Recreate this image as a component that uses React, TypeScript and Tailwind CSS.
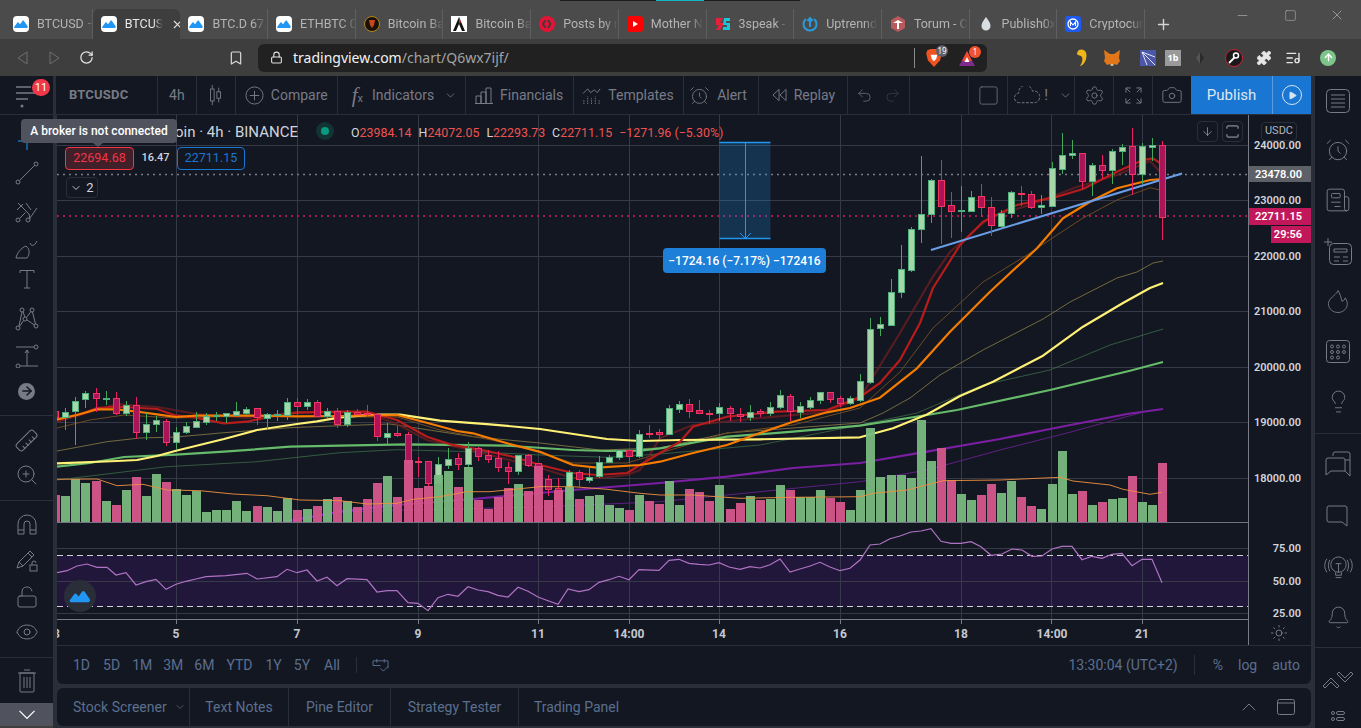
import {
  AlarmClock,
  ArrowDown,
  ArrowRight,
  ArrowUp,
  Bell,
  Bookmark,
  Camera,
  ChevronDown,
  ChevronUp,
  Eye,
  Lightbulb,
  ListMusic,
  Lock,
  LockOpen,
  Minus,
  Newspaper,
  Play,
  Plus,
  Puzzle,
  Redo2,
  RotateCw,
  Ruler,
  Settings,
  Square,
  Sun,
  Undo2,
  X,
  ZoomIn,
} from "lucide-react";
import type { ReactNode } from "react";

// [top, bottom, high, low, up]
const candles: [number, number, number, number, number][] = [
  [411, 417, 408, 418, 0], [412, 417, 408, 430, 1], [401, 411, 397, 445, 1], [393, 399, 391, 408, 1],
  [393, 398, 388, 412, 0], [398, 399, 391, 405, 1], [398, 413, 392, 415, 0], [405, 413, 401, 416, 1],
  [405, 432, 397, 439, 0], [424, 432, 413, 440, 1], [420, 424, 416, 432, 1], [421, 442, 419, 446, 0],
  [432, 442, 427, 450, 1], [426, 432, 422, 434, 1], [421, 427, 412, 427, 1], [416, 422, 413, 425, 1],
  [415, 416, 412, 421, 1], [413, 416, 413, 423, 1], [411, 415, 402, 415, 1], [409, 413, 407, 415, 1],
  [408, 417, 408, 425, 0], [414, 418, 413, 430, 1], [414, 415, 410, 421, 1], [402, 415, 398, 420, 1],
  [402, 406, 398, 415, 0], [402, 406, 399, 410, 1], [402, 416, 400, 416, 0], [411, 416, 408, 418, 1],
  [411, 424, 408, 428, 0], [412, 424, 410, 427, 1], [412, 414, 409, 414, 0], [413, 414, 405, 417, 0],
  [414, 436, 413, 441, 0], [433, 437, 423, 444, 1], [433, 435, 426, 437, 0], [434, 462, 432, 470, 0],
  [461, 462, 457, 477, 0], [461, 483, 461, 487, 0], [464, 483, 457, 495, 1], [459, 465, 448, 469, 1],
  [458, 464, 453, 470, 0], [448, 464, 442, 467, 1], [448, 456, 447, 461, 0], [455, 459, 450, 463, 0],
  [458, 467, 451, 472, 0], [467, 471, 462, 484, 0], [455, 471, 455, 475, 1], [455, 465, 454, 467, 0],
  [463, 485, 463, 490, 0], [479, 489, 475, 496, 0], [488, 499, 478, 502, 0], [472, 499, 470, 500, 1],
  [472, 479, 470, 487, 0], [477, 480, 468, 483, 1], [462, 476, 456, 478, 1], [457, 462, 455, 463, 1],
  [450, 457, 450, 460, 1], [450, 456, 449, 463, 0], [434, 456, 430, 458, 1], [433, 434, 425, 438, 0],
  [432, 434, 429, 439, 0], [408, 434, 405, 435, 1], [404, 409, 401, 413, 1], [404, 411, 399, 418, 0],
  [410, 413, 400, 413, 0], [413, 413, 410, 424, 0], [407, 413, 403, 421, 1], [408, 413, 406, 421, 0],
  [414, 416, 408, 422, 0], [412, 417, 405, 421, 1], [411, 413, 409, 417, 0], [407, 413, 402, 416, 1],
  [395, 407, 390, 409, 1], [396, 411, 394, 421, 0], [406, 412, 402, 418, 1], [400, 407, 397, 409, 1],
  [392, 400, 392, 404, 1], [392, 399, 392, 403, 0], [398, 403, 396, 407, 0], [398, 403, 396, 405, 1],
  [381, 400, 374, 402, 1], [329, 382, 318, 384, 1], [324, 328, 317, 336, 1], [292, 325, 279, 326, 1],
  [269, 292, 245, 298, 1], [229, 270, 227, 272, 1], [214, 229, 156, 243, 1], [180, 214, 179, 223, 1],
  [180, 206, 160, 244, 0], [205, 211, 192, 238, 0], [210, 211, 186, 232, 1], [197, 211, 191, 212, 1],
  [196, 207, 184, 217, 0], [207, 225, 197, 236, 0], [213, 226, 210, 229, 1], [192, 213, 191, 218, 1],
  [193, 194, 186, 206, 0], [194, 207, 191, 209, 0], [205, 207, 195, 214, 1], [168, 206, 162, 206, 1],
  [155, 169, 133, 174, 1], [153, 155, 140, 159, 1], [153, 181, 153, 189, 0], [165, 181, 163, 196, 1],
  [165, 170, 155, 179, 0], [151, 170, 149, 184, 1], [147, 151, 144, 165, 1], [146, 174, 128, 195, 0],
  [146, 174, 143, 184, 1], [145, 147, 138, 161, 1], [145, 217, 141, 240, 0],
];

// positive is a green bar, negative a pink one
const volumes = [
  -27, 26, 43, 39, -41, 21, -17, 32, -45, 26, 48, -40, 33, 27, 31, 10, 12, 12, 21, 11, -16, 15, 11, 24, -12, 13, -16,
  23, -25, 21, -15, -23, -39, 46, -25, -62, -34, -36, 47, 51, -35, 55, -22, -13, -25, -34, 38, -31, -56, -22, -32, 35,
  -23, 26, 27, 17, 14, -12, 27, -21, -18, 41, 17, -33, -30, -21, 37, -13, -19, 26, -22, 23, 37, -32, 25, 25, 32, -24,
  -20, 12, 32, 94, 45, 47, 47, 44, 102, 61, -74, -42, 28, 22, -27, -38, 29, 41, -25, -16, 13, 38, 71, 28, -31, 17, -20,
  23, 24, -46, 20, 17, -59,
];

const rsi = "57,572.7 67,570.7 77,566 87,564 97,567.3 107,567.3 116,575 126,572.7 136,585 146,581.7 156,579.3 166,589.3 176,584.3 186,581.3 196,579 206,576.7 226,575.7 247,573.3 257,579 277,576.7 287,569.3 297,572.7 307,570 317,581 327,577.3 337,585.7 347,578.7 367,579.7 377,592 387,590.7 397,590.7 408,602.7 418,603.3 428,610.7 438,597.7 448,594.3 458,596.3 468,586.7 478,590 488,591.7 498,595.3 508,597 518,587.3 528,591.3 538,597 548,600.7 558,604.3 568,589 579,591.7 589,589.7 599,582.3 609,579.7 619,576.3 629,579.7 639,569.7 659,570.3 669,560.3 679,559.3 689,563.3 699,564.3 709,565 719,562.7 729,567 740,569.3 750,566.7 760,568 770,564.7 780,559 790,572 800,569 810,566 820,562.3 830,567 840,570.7 850,568.3 860,560 870,545 880,544 890,538.7 900,536 911,532 921,531 931,528.7 941,541.3 951,543.3 961,543.3 971,541.7 981,546.7 991,555.3 1002,554 1012,549 1022,550 1032,556.3 1042,556 1052,549 1062,546.3 1072,546.3 1082,559.7 1092,556.3 1102,558.3 1112,554.3 1122,553.3 1132,565.7 1142,559.3 1152,559.3 1162,582.7";

const lines: { pts: string; color: string; width: number; opacity?: number }[] = [
  {
    pts: "57,451 107,441.7 140,438 176,437 224,432.7 290,427.7 340,425.7 390,424 473,436.7 540,443 600,450 660,448 727,433 793,428 860,423 883,413 910,398 940,375 983,350 1043,319 1070,302 1117,278 1137,272 1153,263 1163,261",
    color: "#8a7f45",
    width: 1,
    opacity: 0.8,
  },
  {
    pts: "57,480 167,466.7 257,461.7 340,452.7 397,449.7 473,451.7 540,455 607,457.3 660,454 760,445 860,425 917,413 983,385 1050,370 1110,345 1163,329",
    color: "#3c6b48",
    width: 1,
    opacity: 0.8,
  },
  {
    pts: "57,428 90,420 124,415 176,418 257,415.7 340,417 397,417 440,430 507,443 573,463 627,463 727,433 793,425 860,408 900,372 933,328 983,282 1027,255 1057,235 1083,218 1117,200 1150,187.7 1160,190",
    color: "#6b4a22",
    width: 1,
  },
  {
    pts: "340,512 407,510 540,507 660,501.7 760,491.7 860,481.7 927,470 1000,450 1067,433 1140,413",
    color: "#5f1f82",
    width: 1,
  },
  {
    pts: "57,422 97,410 117,404 157,407 197,414 247,418 297,412 367,413 397,424 427,440 490,455 540,468 573,478 600,478 627,475 640,470 660,438 693,425 760,418 827,412 860,398 900,333 932,278 950,252 990,217 1030,205 1077,187 1117,175 1150,161 1163,175",
    color: "#6e1f22",
    width: 2.2,
    opacity: 0.75,
  },
  {
    pts: "283,522 340,511.7 390,505.7 473,499 573,490 660,483 727,476.7 793,468 860,463 927,451.7 1000,439 1050,429 1127,414 1163,409",
    color: "#7b1fa2",
    width: 2.2,
  },
  {
    pts: "57,466.7 90,463 124,457 176,454.7 224,451.7 290,446.7 340,445.7 407,444.3 507,445.7 573,450 607,451 640,450.7 660,448.3 727,436.7 793,431.7 860,425.7 927,415 957,410 1050,390 1130,370.7 1163,362",
    color: "#66bb6a",
    width: 2.2,
  },
  {
    pts: "57,463.3 117,461 137,460 157,456 176,450.7 224,439 257,430 297,424 317,421.3 340,417.3 373,414.7 400,414.7 440,420.7 490,424.3 540,429 607,439 640,441 680,440 760,439.3 860,437.3 893,428.3 927,414.5 960,396 993,381.7 1043,355.7 1083,326.7 1123,303 1150,288 1163,283",
    color: "#fff176",
    width: 2.2,
  },
  {
    pts: "57,420 84,413 97,408 117,406.7 140,408 157,409 174,415 197,418 224,423.3 247,421.7 270,416.7 297,412.7 340,411.7 367,411.7 397,420 427,436.7 450,444.3 490,451.7 513,456.7 540,465 573,473 597,475 627,473 640,465 660,453 680,441.7 693,426.7 727,416.7 777,411.7 827,410 860,397 880,383 900,360 920,323 933,288 960,245 983,221.7 1017,205 1057,196.7 1083,189 1117,171.7 1143,160 1153,158.3 1163,165",
    color: "#b71c1c",
    width: 2.2,
  },
  {
    pts: "57,419.3 77,415 97,409.3 117,409.3 140,412 157,414.3 176,417 197,415.7 257,415.7 297,416.3 340,416 397,415 423,421.7 457,431 473,433.3 507,443.3 540,451.7 573,465 597,467.7 640,465 660,461.7 693,453 727,445 760,433 793,421.7 827,412.3 850,408 880,397.7 917,368.3 950,331.7 990,291.7 1037,248.3 1063,218.3 1090,201.7 1117,188.3 1150,180 1163,179",
    color: "#f57c00",
    width: 2.2,
  },
];

const volumeMa = "57,479.3 97,479 117,485.7 143,484.3 167,490 200,490.7 233,494 267,495.7 300,500 340,500.7 367,504 397,503.3 413,499.3 440,496.7 467,491.7 490,491.7 540,486.7 573,486.7 607,489.3 640,493.3 660,495 693,495 740,498.3 793,497.3 860,496.7 873,493.3 907,490 943,480.7 1000,480 1060,477.3 1073,481 1110,485 1123,489.3 1150,494.3 1162,492.3";

const hGrid = [145.5, 200.5, 256.5, 311.5, 367.5, 422.5, 478.5, 548.5, 581.5, 613.5];
const vGrid = [176.5, 297.5, 418.5, 538.5, 629.5, 719.5, 840.5, 961.5, 1051.5, 1142.5];

const timeLabels = [
  { x: 176, t: "5" }, { x: 297, t: "7" }, { x: 418, t: "9" }, { x: 538, t: "11" }, { x: 629, t: "14:00" },
  { x: 719, t: "14" }, { x: 840, t: "16" }, { x: 961, t: "18" }, { x: 1052, t: "14:00" }, { x: 1142, t: "21" },
];

const priceLabels = [
  { y: 145, t: "24000.00" }, { y: 200, t: "23000.00" }, { y: 256, t: "22000.00" }, { y: 311, t: "21000.00" },
  { y: 367, t: "20000.00" }, { y: 422, t: "19000.00" }, { y: 478, t: "18000.00" }, { y: 548, t: "75.00" },
  { y: 581, t: "50.00" }, { y: 613, t: "25.00" },
];

function TvLogo({ className }: { className: string }) {
  return (
    <svg viewBox="0 0 24 16" className={className}>
      <path
        d="M1.5 15c-1.2 0-1.8-1.3-1-2.3l5-6.9c.7-.9 1.8-.9 2.5-.1l2.4 2.8 4-5.6c.7-1 2-1 2.7 0l6 8.5c.8 1.2.3 3.6-1.6 3.6z"
        fill="#2196f3"
      />
    </svg>
  );
}

function Favicon({ kind }: { kind: string }) {
  const box = "w-4 h-4 shrink-0";
  if (kind === "tv")
    return (
      <span className={`${box} bg-white rounded-sm flex items-center justify-center`}>
        <TvLogo className="w-3.5 h-2.5" />
      </span>
    );
  if (kind === "btcb")
    return (
      <svg viewBox="0 0 16 16" className={box}>
        <circle cx="8" cy="8" r="7.5" fill="#1a1208" stroke="#b8861b" />
        <path d="M5 4h6l-1 5-2 3-2-3z" fill="#c9471f" />
      </svg>
    );
  if (kind === "a")
    return (
      <svg viewBox="0 0 16 16" className={box}>
        <rect width="16" height="16" fill="#fff" />
        <path d="M8 1l6 14h-3L8 8l-3 7H2z" fill="#111" />
        <path d="M8 1l2 5-2 2z" fill="#d9232e" />
      </svg>
    );
  if (kind === "hive")
    return (
      <svg viewBox="0 0 16 16" className={box}>
        <circle cx="8" cy="8" r="8" fill="#e31337" />
        <path d="M3 8l2.5-4h2L5 8l2.5 4h-2zM8 4h2l2.5 4-2.5 4H8l2.5-4z" fill="#3a3a3a" />
      </svg>
    );
  if (kind === "yt")
    return (
      <svg viewBox="0 0 16 16" className={box}>
        <rect width="16" height="16" rx="3" fill="#f00" />
        <path d="M6 5l5 3-5 3z" fill="#fff" />
      </svg>
    );
  if (kind === "3s")
    return (
      <svg viewBox="0 0 16 16" className={box}>
        <path d="M1 2h7L5 7h3v2L5 14H1l3-5H1z" fill="#ea1e3a" />
        <path d="M9 2h6v3h-4v2h4v7H8v-3h4V9H8z" fill="#19c4d8" />
      </svg>
    );
  if (kind === "up")
    return (
      <svg viewBox="0 0 16 16" className={box} fill="none" stroke="#2b9ad8" strokeWidth="2">
        <path d="M4 3a6.5 6.5 0 1 0 8 0" />
        <path d="M8 11V2M5.5 5L8 2l2.5 3" />
      </svg>
    );
  if (kind === "torum")
    return (
      <svg viewBox="0 0 16 16" className={box}>
        <path d="M8 0l7 4v8l-7 4-7-4V4z" fill="#b8595b" />
        <path d="M3 7l5-3 5 3H9v6H7V7z" fill="#fff" />
      </svg>
    );
  if (kind === "p0x")
    return (
      <svg viewBox="0 0 16 16" className={box}>
        <path d="M8 1c3 4 4.5 6 4.5 9a4.5 4.5 0 0 1-9 0C3.5 7 5 5 8 1z" fill="#d9dee2" />
      </svg>
    );
  return (
    <svg viewBox="0 0 16 16" className={box}>
      <rect width="16" height="16" rx="3" fill="#1e5af0" />
      <circle cx="8" cy="8" r="5" fill="none" stroke="#fff" strokeWidth="1.3" />
      <path d="M5.5 10V6L8 9l2.5-3v4" fill="none" stroke="#fff" strokeWidth="1.1" />
    </svg>
  );
}

const tabs = [
  { icon: "tv", label: "BTCUSD –" },
  { icon: "tv", label: "BTCUS", active: true },
  { icon: "tv", label: "BTC.D 67." },
  { icon: "tv", label: "ETHBTC 0" },
  { icon: "btcb", label: "Bitcoin Ba" },
  { icon: "a", label: "Bitcoin Ba" },
  { icon: "hive", label: "Posts by r" },
  { icon: "yt", label: "Mother N" },
  { icon: "3s", label: "3speak -" },
  { icon: "up", label: "Uptrennd" },
  { icon: "torum", label: "Torum - C" },
  { icon: "p0x", label: "Publish0x" },
  { icon: "cmc", label: "Cryptocur" },
];

function TabStrip() {
  return (
    <div className="h-[39px] shrink-0 bg-[#4b4b4b] flex items-end pl-[5px] relative font-['Roboto',sans-serif]">
      {tabs.map((tab, i) => (
        <div
          key={i}
          className={`w-[87.7px] h-[30px] flex items-center pl-[8px] pr-[5px] gap-[8px] overflow-hidden ${
            tab.active ? "bg-[#3e3e3e] rounded-t-md text-[#e8e8e8]" : "text-[#b4b4b4] border-r border-[#5f5f5f]"
          }`}
        >
          <Favicon kind={tab.icon} />
          <span className="text-[12.5px] whitespace-nowrap flex-1 leading-none [mask-image:linear-gradient(to_right,black_75%,transparent)]">
            {tab.label}
          </span>
          {tab.active && <X size={13} className="shrink-0 text-[#e0e0e0]" strokeWidth={2} />}
        </div>
      ))}
      <Plus size={17} className="ml-[10px] mb-[6px] text-[#d4d4d4]" strokeWidth={2} />
      <div className="flex-1" />
      <div className="flex items-center h-[30px] self-start pr-[16px] text-[#b9b9b9]">
        <Minus size={15} strokeWidth={1} />
        <Square size={13} strokeWidth={1} className="ml-[34px]" />
        <X size={16} strokeWidth={1} className="ml-[32px]" />
      </div>
    </div>
  );
}

function AddressRow() {
  return (
    <div className="h-[37px] shrink-0 bg-[#3e3e3e] flex items-center">
      <svg viewBox="0 0 16 16" className="w-4 h-4 ml-[15px] text-[#6f6f6f]" fill="none" stroke="currentColor">
        <path d="M12 2v12L3 8z" />
      </svg>
      <svg viewBox="0 0 16 16" className="w-4 h-4 ml-[15px] text-[#6f6f6f]" fill="none" stroke="currentColor">
        <path d="M4 2v12l9-6z" />
      </svg>
      <RotateCw size={15} className="ml-[17px] text-[#e4e4e4]" strokeWidth={2} />
      <Bookmark size={16} className="ml-[134px] text-[#dadada]" strokeWidth={1.8} />
      <div className="ml-[14px] w-[729px] h-[28px] bg-[#212121] rounded-md flex items-center pl-[12px]">
        <Lock size={13} className="text-[#e0e0e0]" strokeWidth={2} />
        <span className="ml-[10px] text-[14px] leading-none text-[#f2f2f2] font-['Noto_Sans',sans-serif]">
          tradingview.com<span className="text-[#a3a3a3]">/chart/Q6wx7ijf/</span>
        </span>
        <div className="flex-1" />
        <div className="w-px h-[20px] bg-[#8a8a8a]" />
        <div className="relative ml-[10px]">
          <svg viewBox="0 0 16 18" className="w-[18px] h-[20px]">
            <path d="M2 2l3-1h6l3 1 1 3-1.5 6L8 17l-5.5-6L1 5z" fill="#f0531f" />
            <path d="M5 6h6l-1 4-2 2-2-2z" fill="#fff" />
          </svg>
          <span className="absolute -top-[3px] left-[11px] w-[12px] h-[12px] rounded-full bg-[#5d5f6b] text-white text-[8px] leading-[12px] text-center">
            19
          </span>
        </div>
        <div className="relative ml-[15px] mr-[11px]">
          <svg viewBox="0 0 18 16" className="w-[18px] h-4">
            <path d="M9 1l8 15H1z" fill="#7d2a8c" />
            <path d="M9 1l5 10H4z" fill="#ef4a2b" />
            <path d="M9 7l2.5 5h-5z" fill="#fff" />
          </svg>
          <span className="absolute -top-[4px] left-[11px] w-[12px] h-[12px] rounded-full bg-[#f0532d] text-white text-[8px] leading-[12px] text-center">
            1
          </span>
        </div>
      </div>
      <div className="flex items-center flex-1">
        <svg viewBox="0 0 16 20" className="w-[16px] h-[20px] ml-[87px]">
          <path d="M5 2c5-2 9 2 7 9-1 4-4 7-6 7 2-3 3-6 2-9-1-2-4-1-5-3 0-2 1-3 2-4z" fill="#efb61c" />
        </svg>
        <svg viewBox="0 0 18 18" className="w-[18px] h-[18px] ml-[13px]">
          <path d="M1 1l6 4h4l6-4-1 8 1 3-3 4-3-1H7l-3 1-3-4 1-3z" fill="#e2761b" />
          <path d="M7 15h4l-1 2H8z" fill="#c9b59e" />
        </svg>
        <svg viewBox="0 0 16 16" className="w-4 h-4 ml-[19px]">
          <rect width="16" height="16" fill="#4c57a8" />
          <path d="M2 2l13 13M2 2l13 5M2 2l5 13" stroke="#dfe4f5" strokeWidth="1" fill="none" />
        </svg>
        <span className="w-4 h-4 ml-[9px] bg-[#9a9a9a] text-white text-[9px] font-bold leading-4 text-center">1b</span>
        <svg viewBox="0 0 10 14" className="w-[10px] h-[14px] ml-[14px]">
          <path d="M5 1l4 6-4 6-4-6z" fill="#2b2b2b" />
          <path d="M5 1v12l-4-6z" fill="#555" />
        </svg>
        <svg viewBox="0 0 18 18" className="w-[18px] h-[18px] ml-[20px]">
          <circle cx="9" cy="9" r="8.5" fill="#1a1a1a" stroke="#c4213a" />
          <circle cx="11" cy="6.5" r="2.5" fill="none" stroke="#fff" strokeWidth="1.5" />
          <path d="M9.5 8.5L4 14" stroke="#fff" strokeWidth="1.8" />
        </svg>
        <Puzzle size={16} className="ml-[13px] text-[#e6e6e6] fill-[#e6e6e6]" strokeWidth={1} />
        <ListMusic size={16} className="ml-[13px] text-[#e6e6e6]" strokeWidth={2} />
        <span className="w-4 h-4 ml-[19px] rounded-full bg-[#7dc58a] flex items-center justify-center">
          <ArrowUp size={11} className="text-white" strokeWidth={3} />
        </span>
      </div>
    </div>
  );
}

function Sep() {
  return <div className="w-px self-stretch bg-[#2a2e39]" />;
}

function ToolBtn({ w, children }: { w: string; children: ReactNode }) {
  return <div className={`${w} h-full flex items-center justify-center gap-[7px] text-[#787b86]`}>{children}</div>;
}

function ChartToolbar() {
  return (
    <div className="h-[39px] shrink-0 bg-[#131722] border-b border-[#2a2e39] flex items-stretch text-[14px] font-['Roboto',sans-serif]">
      <div className="w-[53px] relative flex items-center justify-center">
        <svg viewBox="0 0 22 26" className="w-[22px] h-[26px] text-[#787b86]" stroke="currentColor" fill="none">
          <path d="M1 5h15M1 11h20M1 17h12" strokeWidth="1.5" />
          <circle cx="7" cy="24" r="1.5" fill="currentColor" stroke="none" />
        </svg>
        <span className="absolute top-[3px] left-[32px] w-[18px] h-[17px] rounded-full bg-[#f0384a] text-white text-[11px] leading-[17px] text-center">
          11
        </span>
      </div>
      <div className="w-[3px] bg-[#2a2e39]" />
      <div className="w-[101px] h-full flex items-center pl-[13px] text-[#787b86]">
        <span className="font-bold text-[13px] tracking-[0.2px]">BTCUSDC</span>
      </div>
      <Sep />
      <ToolBtn w="w-[38px]">
        <span>4h</span>
      </ToolBtn>
      <Sep />
      <ToolBtn w="w-[38px]">
        <svg viewBox="0 0 16 24" className="w-[15px] h-[22px]" fill="none" stroke="currentColor">
          <path d="M4.5 1v22M11.5 4v16" />
          <rect x="2.5" y="5.5" width="4" height="13" fill="#131722" />
          <rect x="9.5" y="8.5" width="4" height="7" fill="#131722" />
        </svg>
      </ToolBtn>
      <Sep />
      <ToolBtn w="w-[101px]">
        <svg viewBox="0 0 20 20" className="w-[19px] h-[19px]" fill="none" stroke="currentColor">
          <circle cx="10" cy="10" r="9" />
          <path d="M10 5v10M5 10h10" />
        </svg>
        <span>Compare</span>
      </ToolBtn>
      <Sep />
      <div className="w-[127px] h-full flex items-center pl-[14px] text-[#787b86]">
        <span className="font-['Liberation_Serif',serif] italic text-[21px] leading-none">f</span>
        <span className="text-[11px] mt-[9px] mr-[9px]">x</span>
        <span>Indicators</span>
        <ChevronDown size={13} className="ml-[10px]" strokeWidth={1.5} />
      </div>
      <Sep />
      <ToolBtn w="w-[107px]">
        <svg viewBox="0 0 18 18" className="w-[18px] h-[18px]" fill="none" stroke="currentColor">
          <path d="M1 17V10h5V17M6 17V6h5v11M11 17V2h5v15M0 17.5h18" />
        </svg>
        <span>Financials</span>
      </ToolBtn>
      <Sep />
      <ToolBtn w="w-[109px]">
        <svg viewBox="0 0 20 20" className="w-[19px] h-[19px]" fill="none" stroke="currentColor">
          <path d="M1 8l5-5 3 4 4-3 3 3 3-4" />
          <path d="M2 19v-5M6 19v-8M10 19v-6M14 19v-8M18 19v-5" strokeDasharray="1.5 1" />
        </svg>
        <span>Templates</span>
      </ToolBtn>
      <Sep />
      <div className="w-[75px] h-full flex items-center justify-center gap-[7px] pr-[6px] text-[#787b86]">
        <AlarmClock size={21} strokeWidth={1} />
        <span>Alert</span>
      </div>
      <Sep />
      <ToolBtn w="w-[88px]">
        <svg viewBox="0 0 16 14" className="w-[15px] h-[14px]" fill="none" stroke="currentColor">
          <path d="M7.5 1L1 7l6.5 6zM15 1L8.5 7l6.5 6z" />
        </svg>
        <span>Replay</span>
      </ToolBtn>
      <Sep />
      <div className="w-[61px] h-full flex items-center justify-center gap-[11px]">
        <Undo2 size={17} strokeWidth={1} className="text-[#787b86]" />
        <Redo2 size={17} strokeWidth={1} className="text-[#3f4350]" />
      </div>
      <Sep />
      <div className="w-[58px]" />
      <Sep />
      <ToolBtn w="w-[38px]">
        <Square size={23} strokeWidth={0.8} />
      </ToolBtn>
      <Sep />
      <div className="w-[66px] h-full flex items-center pl-[6px] text-[#787b86]">
        <svg viewBox="0 0 28 18" className="w-[27px] h-[18px]" fill="none" stroke="currentColor" strokeDasharray="3 1.5">
          <path d="M6 17a5 5 0 0 1-1-10 7 7 0 0 1 14-2 6 6 0 0 1 3 12z" />
        </svg>
        <span className="ml-[3px] text-[15px]">!</span>
        <ChevronDown size={13} className="ml-[11px]" strokeWidth={1.5} />
      </div>
      <Sep />
      <ToolBtn w="w-[38px]">
        <Settings size={21} strokeWidth={1} />
      </ToolBtn>
      <Sep />
      <ToolBtn w="w-[38px]">
        <svg viewBox="0 0 18 18" className="w-[17px] h-[17px]" fill="none" stroke="currentColor">
          <path d="M1 6V1h5M17 6V1h-5M1 12v5h5M17 12v5h-5M1 1l4.5 4.5M17 1l-4.5 4.5M1 17l4.5-4.5M17 17l-4.5-4.5" />
        </svg>
      </ToolBtn>
      <Sep />
      <ToolBtn w="w-[38px]">
        <Camera size={22} strokeWidth={1} />
      </ToolBtn>
      <div className="w-[81px] bg-[#1976d2] flex items-center justify-center text-[15px] text-[#dfe6f0]">Publish</div>
      <div className="w-px bg-[#5c9be0]" />
      <div className="w-[38px] bg-[#1976d2] flex items-center justify-center">
        <span className="w-[20px] h-[20px] rounded-full border border-[#d5e4f5] flex items-center justify-center">
          <Play size={9} className="text-[#d5e4f5] fill-[#d5e4f5] ml-[1px]" />
        </span>
      </div>
    </div>
  );
}

function LeftIcon({ className, children }: { className: string; children: ReactNode }) {
  return <div className={`flex items-center justify-center text-[#787b86] shrink-0 ${className}`}>{children}</div>;
}

function LineSvg({ children }: { children: ReactNode }) {
  return (
    <svg viewBox="0 0 24 24" className="w-[24px] h-[24px] shrink-0" fill="none" stroke="currentColor">
      {children}
    </svg>
  );
}

function LeftToolbar() {
  return (
    <div className="w-[53px] shrink-0 bg-[#131722] flex flex-col items-stretch">
      <div className="h-[10px] shrink-0" />
      <LeftIcon className="h-[32px]">
        <svg viewBox="0 0 20 20" className="w-5 h-5 text-[#2196f3]" fill="none" stroke="currentColor">
          <path d="M10 1v18M1 10h18" />
        </svg>
      </LeftIcon>
      <LeftIcon className="h-[32px]">
        <LineSvg>
          <circle cx="3" cy="21" r="2" />
          <circle cx="21" cy="3" r="2" />
          <path d="M4.5 19.5l15-15" />
        </LineSvg>
      </LeftIcon>
      <LeftIcon className="h-[46px]">
        <LineSvg>
          <circle cx="3" cy="20" r="2" />
          <circle cx="13" cy="20" r="2" />
          <path d="M4.5 18.5l6-6M3 3l6 6 5 5 1 5M11 3l5 7M22 8l-7 10M2 10l6-6" />
        </LineSvg>
      </LeftIcon>
      <LeftIcon className="h-[26px]">
        <LineSvg>
          <path d="M1 22h11c3-4 3-9-1-12-5 2-9 7-10 12zM15 7c1 3 4 4 7-2" />
        </LineSvg>
      </LeftIcon>
      <LeftIcon className="h-[36px]">
        <LineSvg>
          <path d="M5 6V3.5h14V6M12 3.5V21M9 21h6" />
        </LineSvg>
      </LeftIcon>
      <LeftIcon className="h-[44px]">
        <LineSvg>
          <circle cx="3" cy="21" r="2" />
          <circle cx="21" cy="19" r="2" />
          <circle cx="7" cy="3" r="2" />
          <circle cx="17" cy="3" r="2" />
          <circle cx="10" cy="12" r="2" />
          <path d="M4 19L7 5M4.5 19.5l4-6M12 13l7.5 5M17.5 5L20.5 17M8 4.5l1.8 5.500M16 4.5l-4.5 6" />
        </LineSvg>
      </LeftIcon>
      <LeftIcon className="h-[30px]">
        <LineSvg>
          <circle cx="21" cy="3" r="2" />
          <circle cx="3" cy="22" r="2" />
          <path d="M1 3h18M5 22h18M12 22V6M10 9l2-3 2 3" />
        </LineSvg>
      </LeftIcon>
      <LeftIcon className="h-[40px]">
        <span className="w-[17px] h-[17px] rounded-full bg-[#787b86] flex items-center justify-center">
          <ArrowRight size={14} className="text-[#131722]" strokeWidth={2.5} />
        </span>
      </LeftIcon>
      <div className="h-[4px] shrink-0" />
      <div className="h-px shrink-0 bg-[#2a2e39]" />
      <LeftIcon className="h-[48px]">
        <Ruler size={25} strokeWidth={1} className="rotate-90" />
      </LeftIcon>
      <LeftIcon className="h-[22px]">
        <ZoomIn size={24} strokeWidth={1} className="shrink-0" />
      </LeftIcon>
      <div className="h-[14px] shrink-0" />
      <div className="h-px shrink-0 bg-[#2a2e39]" />
      <LeftIcon className="h-[48px]">
        <LineSvg>
          <path d="M3 21V11a9 9 0 0 1 18 0v10h-6V11a3 3 0 0 0-6 0v10zM3 17h6M15 17h6" />
        </LineSvg>
      </LeftIcon>
      <LeftIcon className="h-[22px]">
        <LineSvg>
          <path d="M2 20l2-6L15 3l4 4L8 18zM4 14l4 4M13 5l4 4" />
          <rect x="15" y="17" width="7" height="6" />
          <path d="M17 17v-2a2 2 0 0 1 4 0" />
        </LineSvg>
      </LeftIcon>
      <LeftIcon className="h-[52px]">
        <LockOpen size={24} strokeWidth={1} />
      </LeftIcon>
      <LeftIcon className="h-[18px]">
        <Eye size={24} strokeWidth={1} className="shrink-0" />
      </LeftIcon>
      <div className="h-[16px] shrink-0" />
      <div className="h-px shrink-0 bg-[#2a2e39]" />
      <LeftIcon className="h-[45px]">
        <LineSvg>
          <path d="M5 4h14v18a1 1 0 0 1-1 1H6a1 1 0 0 1-1-1zM3 4h18M9 1h6M9 8v11M12 8v11M15 8v11" />
        </LineSvg>
      </LeftIcon>
      <div className="h-[23px] shrink-0 bg-[#50535e] flex items-center justify-center">
        <svg viewBox="0 0 20 12" className="w-[18px] h-[10px] text-white" fill="none" stroke="currentColor" strokeWidth="1.5">
          <path d="M1 1l9 9 9-9" />
        </svg>
      </div>
      <div className="h-[2px] shrink-0 bg-[#3e3e3e]" />
    </div>
  );
}

function RightToolbar() {
  const Row = ({ h, children }: { h: string; children: ReactNode }) => (
    <div className={`${h} shrink-0 flex items-center justify-center text-[#787b86]`}>{children}</div>
  );
  return (
    <div className="w-[46px] shrink-0 bg-[#131722] flex flex-col">
      <Row h="h-[50px]">
        <svg viewBox="0 0 24 24" className="w-[24px] h-[24px]" fill="none" stroke="currentColor">
          <rect x="0.5" y="0.5" width="23" height="23" rx="4" />
          <path d="M5 6h14M5 10h14M5 14h14M5 18h14" />
        </svg>
      </Row>
      <Row h="h-[48px]">
        <AlarmClock size={26} strokeWidth={0.9} />
      </Row>
      <Row h="h-[52px]">
        <Newspaper size={26} strokeWidth={0.9} className="-scale-x-100" />
      </Row>
      <Row h="h-[50px]">
        <svg viewBox="0 0 30 28" className="w-[30px] h-[28px]" fill="none" stroke="currentColor">
          <path d="M5 1v8M1 5h8" />
          <rect x="6.5" y="6.5" width="22" height="21" rx="4" />
          <path d="M11 12h13v3H11zM11 20h6M20 20h5M11 24h5M20 24h5" />
        </svg>
      </Row>
      <Row h="h-[50px]">
        <svg viewBox="0 0 24 26" className="w-[22px] h-[25px]" fill="none" stroke="currentColor">
          <path d="M12 1C11 5 4 8 2 13c-2 6 3 12 10 12s11-6 10-11c-.5-2-1-3-2-5-.5 2-2 3-3.5 4C15.5 9 14 4 12 1z" />
        </svg>
      </Row>
      <Row h="h-[49px]">
        <svg viewBox="0 0 24 24" className="w-[24px] h-[24px]" fill="none" stroke="currentColor">
          <rect x="0.5" y="1.5" width="23" height="22" rx="3" />
          <circle cx="6" cy="7.5" r="1.5" />
          <circle cx="12" cy="7.5" r="1.5" />
          <circle cx="18" cy="7.5" r="1.5" />
          <circle cx="6" cy="13" r="1.5" />
          <circle cx="12" cy="13" r="1.5" />
          <circle cx="18" cy="13" r="1.5" />
          <circle cx="6" cy="18.5" r="1.5" />
          <circle cx="12" cy="18.5" r="1.5" />
        </svg>
      </Row>
      <Row h="h-[52px]">
        <Lightbulb size={25} strokeWidth={0.9} />
      </Row>
      <div className="h-[6px] shrink-0" />
      <div className="h-px bg-[#2a2e39] shrink-0" />
      <Row h="h-[59px]">
        <svg viewBox="0 0 26 26" className="w-[26px] h-[26px]" fill="none" stroke="currentColor">
          <path d="M8 5V3a2 2 0 0 1 2-2h13a2 2 0 0 1 2 2v6" />
          <path d="M1 9a2 2 0 0 1 2-2h15a2 2 0 0 1 2 2v11H6l-5 4zM20 9h5v16l-5-5" />
        </svg>
      </Row>
      <Row h="h-[46px]">
        <svg viewBox="0 0 24 24" className="w-[24px] h-[24px]" fill="none" stroke="currentColor">
          <path d="M1 4a2 2 0 0 1 2-2h16a2 2 0 0 1 2 2v18l-5-4H3a2 2 0 0 1-2-2z" />
        </svg>
      </Row>
      <Row h="h-[56px]">
        <svg viewBox="0 0 32 26" className="w-[31px] h-[25px]" fill="none" stroke="currentColor">
          <circle cx="16" cy="10" r="8" />
          <path d="M13 18v3h6v-3M13 23.5h6M16 9v9M13 9h6M4 4c-3 4-3 10 0 14M7 5c-2 4-2 8 0 12M28 4c3 4 3 10 0 14M25 5c2 4 2 8 0 12" />
        </svg>
      </Row>
      <Row h="h-[45px]">
        <Bell size={25} strokeWidth={0.9} />
      </Row>
      <div className="h-[7px] shrink-0" />
      <div className="h-px bg-[#2a2e39] shrink-0" />
      <Row h="h-[63px]">
        <svg viewBox="0 0 32 20" className="w-[32px] h-[20px]" fill="none" stroke="currentColor">
          <path d="M1 16L9 8l8 8-2 2-6-6-6 6zM15 4l8 8 8-8-2-2-6 6-6-6z" />
        </svg>
      </Row>
      <div className="flex justify-center text-[#787b86]">
        <svg viewBox="0 0 14 10" className="w-[14px] h-[10px]" fill="none" stroke="currentColor">
          <circle cx="2" cy="2" r="1.5" />
          <circle cx="2" cy="8" r="1.5" />
          <rect x="5.5" y="0.5" width="8" height="3" rx="1.5" />
          <rect x="5.5" y="6.5" width="8" height="3" rx="1.5" />
        </svg>
      </div>
    </div>
  );
}

function ChartDrawing() {
  const xAt = (i: number) => Math.round(55.3 + 10.063 * i);
  return (
    <svg viewBox="57 115 1191 530" className="block w-[1191px] h-[530px]">
      <rect x="57" y="555.5" width="1191" height="51.5" fill="#21173a" />
      {hGrid.map((y) => (
        <line key={y} x1="57" x2="1248" y1={y} y2={y} stroke="#363a48" />
      ))}
      {vGrid.map((x) => (
        <line key={x} x1={x} x2={x} y1="115" y2="620" stroke="#363a48" />
      ))}
      {vGrid.map((x) => (
        <line key={`t${x}`} x1={x} x2={x} y1="620" y2="624" stroke="#787b86" />
      ))}
      <line x1="57" x2="1248" y1="174.5" y2="174.5" stroke="#787b86" strokeDasharray="2 4" strokeWidth="1.5" />
      <line x1="57" x2="1248" y1="216" y2="216" stroke="#d81b60" strokeDasharray="2 4" strokeWidth="1.5" />

      <rect x="719.5" y="142.5" width="51" height="96" fill="#2196f3" fillOpacity="0.22" />
      <line x1="719.5" x2="770.5" y1="142.5" y2="142.5" stroke="#2196f3" strokeWidth="1.5" />
      <line x1="719.5" x2="770.5" y1="238.5" y2="238.5" stroke="#2196f3" strokeWidth="1.5" />
      <path d="M745.5 143v95M740 233l5.5 5.5 5.5-5.5" stroke="#2196f3" fill="none" />

      {lines.map((l) => (
        <polyline
          key={l.color}
          points={l.pts}
          fill="none"
          stroke={l.color}
          strokeWidth={l.width}
          strokeOpacity={l.opacity ?? 1}
          strokeLinejoin="round"
        />
      ))}
      <line x1="931" y1="250" x2="1182" y2="173.5" stroke="#6a9ee6" strokeWidth="2" />

      <g shapeRendering="crispEdges">
        {candles.map(([top, bottom, high, low, up], i) => {
          const x = xAt(i);
          return (
            <g key={i}>
              <line x1={x + 0.5} x2={x + 0.5} y1={high} y2={low} stroke={up ? "#43a85a" : "#e91e63"} />
              <rect
                x={x - 3 + 0.5}
                y={top + 0.5}
                width="6"
                height={Math.max(bottom - top, 1)}
                fill={up ? "#a5d6a7" : "#ad1457"}
                stroke={up ? "#4caf7d" : "#f2365f"}
              />
            </g>
          );
        })}
        {volumes.map((v, i) => {
          const x = xAt(i);
          return (
            <rect
              key={i}
              x={x - 4}
              y={522 - Math.abs(v)}
              width="9"
              height={Math.abs(v)}
              fill={v > 0 ? "#78b880" : "#d5568b"}
              fillOpacity="0.95"
            />
          );
        })}
      </g>
      <polyline points={volumeMa} fill="none" stroke="#f0903f" strokeWidth="1" strokeOpacity="0.9" />

      <line x1="57" x2="1248" y1="522.5" y2="522.5" stroke="#6f7280" />
      <line x1="57" x2="1248" y1="555.5" y2="555.5" stroke="#cfd0d6" strokeDasharray="6 4" />
      <line x1="57" x2="1248" y1="606.5" y2="606.5" stroke="#cfd0d6" strokeDasharray="6 4" />
      <polyline points={rsi} fill="none" stroke="#b073c4" strokeWidth="1.2" />
      <line x1="57" x2="1248" y1="619.5" y2="619.5" stroke="#787b86" />
    </svg>
  );
}

function ChartPane() {
  return (
    <div className="h-[530px] shrink-0 bg-[#131722] flex relative font-['Roboto',sans-serif]">
      <div className="w-[1191px] h-full relative overflow-hidden">
        <ChartDrawing />
        {timeLabels.map((l) => (
          <span
            key={`${l.x}${l.t}`}
            className="absolute top-[512px] w-[40px] -ml-[20px] text-center text-[12px] font-bold text-[#c5c8d0] leading-[14px]"
            style={{ left: l.x - 57 }}
          >
            {l.t}
          </span>
        ))}
        <span className="absolute top-[512px] -left-[4px] text-[12px] font-bold text-[#c5c8d0] leading-[14px]">3</span>

        {/* legend */}
        <div className="absolute left-[118px] top-[8px] h-[18px] flex items-center text-[15px] text-[#d1d4dc] whitespace-nowrap">
          <span>oin · 4h · BINANCE</span>
        </div>
        <span className="absolute left-[259px] top-[7px] w-[18px] h-[18px] rounded-full bg-[#123533] flex items-center justify-center">
          <span className="w-2 h-2 rounded-full bg-[#089981]" />
        </span>
        <div className="absolute left-[294px] top-[10px] flex gap-[7px] text-[12.4px] leading-[16px] text-[#ef5350] whitespace-nowrap">
          <span><span className="text-[#d1d4dc]">O</span>23984.14</span>
          <span><span className="text-[#d1d4dc]">H</span>24072.05</span>
          <span><span className="text-[#d1d4dc]">L</span>22293.73</span>
          <span><span className="text-[#d1d4dc]">C</span>22711.15</span>
          <span>−1271.96 (−5.30%)</span>
        </div>
        <div className="absolute left-[8px] top-[32px] flex items-center text-[12.5px] whitespace-nowrap">
          <span className="w-[69px] h-[23px] rounded border border-[#f23645] bg-[#42202a] text-[#f23645] flex items-center justify-center">
            22694.68
          </span>
          <span className="w-[43px] text-center text-[11px] font-medium text-[#d1d4dc]">16.47</span>
          <span className="w-[68px] h-[23px] rounded border border-[#1976d2] text-[#1976d2] flex items-center justify-center">
            22711.15
          </span>
        </div>
        <div className="absolute left-[9px] top-[62px] w-[32px] h-[21px] rounded border border-[#2a2e39] flex items-center justify-center gap-[4px] text-[13px] text-[#d1d4dc]">
          <ChevronDown size={12} strokeWidth={1.8} />
          <span>2</span>
        </div>

        {/* drawing label */}
        <div className="absolute left-[606px] top-[133px] w-[163px] h-[25px] rounded bg-[#1e7fd8] text-white text-[12px] font-medium flex items-center justify-center whitespace-nowrap">
          −1724.16 (−7.17%) −172416
        </div>

        <div className="absolute left-[1140px] top-[6px] flex gap-[4px] text-[#b2b5be]">
          <span className="w-[21px] h-[21px] rounded border border-[#2a2e39] flex items-center justify-center">
            <ArrowDown size={13} strokeWidth={1.2} />
          </span>
          <span className="w-[21px] h-[21px] rounded border border-[#2a2e39] flex items-center justify-center">
            <svg viewBox="0 0 14 14" className="w-[13px] h-[13px]" fill="none" stroke="currentColor">
              <path d="M1 4V2a1 1 0 0 1 1-1h10a1 1 0 0 1 1 1v2M1 10v2a1 1 0 0 0 1 1h10a1 1 0 0 0 1-1v-2" />
            </svg>
          </span>
        </div>

        {/* logo */}
        <span className="absolute left-[7px] top-[465px] w-[32px] h-[32px] rounded-full bg-[#2a2e39] flex items-center justify-center">
          <TvLogo className="w-[22px] h-[14px]" />
        </span>
      </div>

      {/* price axis */}
      <div className="w-[62px] h-full relative border-l border-[#787b86] text-[11px] font-semibold text-[#d1d4dc]">
        <span className="absolute left-[12px] top-[7px] w-[36px] h-[19px] rounded border border-[#2a2e39] flex items-center justify-center text-[11px] text-[#b2b5be] font-normal">
          USDC
        </span>
        {priceLabels.map((l) => (
          <span key={l.t} className="absolute right-[9px] leading-[14px]" style={{ top: l.y - 115 - 6 }}>
            {l.t}
          </span>
        ))}
        <span className="absolute left-0 top-[51px] w-[62px] h-[16px] bg-[#5d6066] text-white flex items-center justify-end pr-[9px] leading-none">
          23478.00
        </span>
        <span className="absolute left-0 top-[93px] w-[62px] h-[17px] bg-[#c2185b] text-white flex items-center justify-end pr-[9px] leading-none">
          22711.15
        </span>
        <span className="absolute left-[22px] top-[111px] w-[40px] h-[17px] bg-[#c2185b] text-white flex items-center justify-end pr-[9px] leading-none">
          29:56
        </span>
        <Sun size={18} strokeWidth={1} className="absolute left-[21px] top-[509px] text-[#9598a1]" />
      </div>
    </div>
  );
}

function RangeBar() {
  const ranges = [
    ["1D", "ml-[16px]"],
    ["5D", "ml-[13px]"],
    ["1M", "ml-[12px]"],
    ["3M", "ml-[11px]"],
    ["6M", "ml-[11px]"],
    ["YTD", "ml-[12px]"],
    ["1Y", "ml-[13px]"],
    ["5Y", "ml-[12px]"],
    ["All", "ml-[14px]"],
  ];
  return (
    <div className="h-[39px] shrink-0 bg-[#131722] rounded-b-md border-t border-[#2a2e39] flex items-center text-[14px] text-[#5b6f8e] font-['Roboto',sans-serif]">
      {ranges.map(([t, m]) => (
        <span key={t} className={m}>
          {t}
        </span>
      ))}
      <div className="w-px h-[16px] bg-[#2a2e39] ml-[16px]" />
      <svg viewBox="0 0 18 16" className="w-[17px] h-[15px] ml-[15px]" fill="none" stroke="currentColor">
        <path d="M1 3h16v8M1 3v5h8M5 1v4M13 1v4M9 11l3 3 5-5" />
      </svg>
      <div className="flex-1" />
      <span>13:30:04 (UTC+2)</span>
      <div className="w-px h-[20px] bg-[#2a2e39] ml-[16px]" />
      <span className="ml-[18px]">%</span>
      <span className="ml-[15px]">log</span>
      <span className="ml-[15px] mr-[11px]">auto</span>
    </div>
  );
}

function BottomTabs() {
  return (
    <div className="h-[38px] shrink-0 mt-[4px] bg-[#131722] rounded-md flex items-stretch text-[14px] text-[#5b6f8e] font-['Roboto',sans-serif]">
      <div className="w-[132px] flex items-center pl-[16px]">
        <span>Stock Screener</span>
        <ChevronDown size={12} className="ml-[7px]" strokeWidth={1.5} />
      </div>
      <Sep />
      <div className="w-[98px] flex items-center justify-center">Text Notes</div>
      <Sep />
      <div className="w-[101px] flex items-center justify-center">Pine Editor</div>
      <Sep />
      <div className="w-[127px] flex items-center justify-center">Strategy Tester</div>
      <Sep />
      <div className="w-[115px] flex items-center justify-center">Trading Panel</div>
      <div className="flex-1" />
      <div className="flex items-center gap-[16px] pr-[16px] text-[#787b86]">
        <ChevronUp size={24} strokeWidth={1} />
        <svg viewBox="0 0 18 16" className="w-[18px] h-[16px]" fill="none" stroke="currentColor">
          <rect x="0.5" y="0.5" width="17" height="15" rx="2" />
          <path d="M1 4h16" />
        </svg>
      </div>
    </div>
  );
}

export default function App() {
  return (
    <div className="w-[1361px] h-[728px] overflow-hidden flex flex-col bg-[#2a2e39] font-['Noto_Sans',sans-serif] relative">
      <TabStrip />
      <AddressRow />
      <div className="flex-1 flex min-h-0">
        <div className="w-[1311px] flex flex-col">
          <ChartToolbar />
          <div className="flex-1 flex min-h-0">
            <LeftToolbar />
            <div className="w-[4px] shrink-0" />
            <div className="flex-1 flex flex-col min-w-0">
              <ChartPane />
              <RangeBar />
              <BottomTabs />
            </div>
          </div>
        </div>
        <div className="w-[4px] shrink-0" />
        <RightToolbar />
      </div>
      {/* tooltip lies over the toolbar and the legend */}
      <div className="absolute left-[21px] top-[119px] w-[156px] h-[24px] rounded bg-[#50535e] text-white text-[12px] font-['Roboto',sans-serif] font-medium flex items-center justify-center">
        A broker is not connected
        <span className="absolute left-[72px] -bottom-[4px] w-0 h-0 border-x-[5px] border-x-transparent border-t-[4px] border-t-[#50535e]" />
      </div>
      <div className="absolute left-[560px] top-0 w-[96px] h-px bg-[#1c1c1c]" />
      <div className="absolute left-[656px] top-0 w-[48px] h-px bg-[#17b6c4]" />
      <div className="absolute left-[704px] top-0 w-[96px] h-px bg-[#1c1c1c]" />
    </div>
  );
}
